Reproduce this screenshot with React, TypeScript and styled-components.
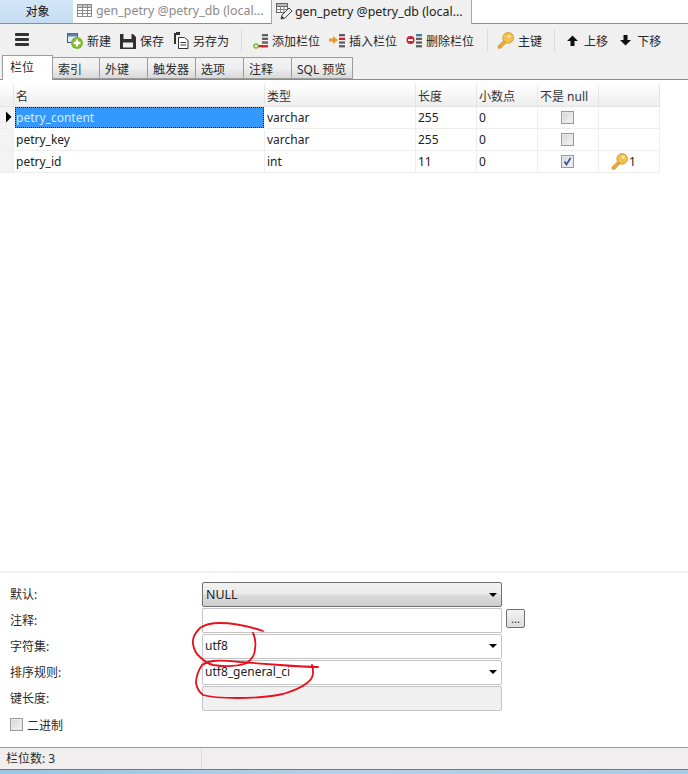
import React from "react";
import styled, { createGlobalStyle } from "styled-components";

const Global = createGlobalStyle`
  html, body { margin: 0; padding: 0; background: #fff; }
  body { font-family: "Noto Sans", "Noto Sans CJK SC", sans-serif; font-size: 12px; color: #1c1c1c; }
`;

const Page = styled.div`
  position: relative;
  width: 688px;
  height: 774px;
  display: flex;
  flex-direction: column;
  overflow: hidden;
  background: #fff;
`;

const TopBar = styled.div`
  height: 24px;
  box-sizing: border-box;
  display: flex;
  background: #fff;
  border-bottom: 1px solid #8d8d8d;
  flex: none;
`;
const ObjectTab = styled.div`
  width: 73px;
  height: 23px;
  background: linear-gradient(#d3e6f8, #c6dcf1);
  display: flex;
  align-items: center;
  justify-content: center;
  padding: 0 0 2px 2px;
  box-sizing: border-box;
  color: #111;
`;
const DocTab = styled.div<{ $active?: boolean }>`
  width: ${p => (p.$active ? 201 : 199)}px;
  height: 24px;
  box-sizing: border-box;
  display: flex;
  align-items: center;
  gap: ${p => (p.$active ? 2 : 3)}px;
  padding: 0 0 2px 4px;
  background: ${p => (p.$active ? "#f0f0f0" : "#fff")};
  color: ${p => (p.$active ? "#222" : "#8a8a8a")};
  border-right: 1px solid #a5a5a5;
  border-bottom: ${p => (p.$active ? "0" : "1px solid #8d8d8d")};
  border-left: ${p => (p.$active ? "1px solid #a5a5a5" : "0")};
  margin-left: ${p => (p.$active ? -1 : 0)}px;
  white-space: nowrap;
  font-size: 12.4px;
  z-index: 1;
`;

const Toolbar = styled.div`
  height: 31px;
  box-sizing: border-box;
  flex: none;
  background: #f0f0f0;
  display: flex;
  align-items: center;
  padding: 2px 0 0 15px;
`;
const Menu = styled.div`
  width: 14px;
  height: 13px;
  margin: -2px 38px 0 0;
  display: flex;
  flex-direction: column;
  justify-content: space-between;
  span { height: 3px; background: #333; border-radius: 1px; }
`;
const ToolButton = styled.div<{ $after?: number; $gap?: number }>`
  display: flex;
  align-items: center;
  gap: ${p => p.$gap ?? 4}px;
  margin-right: ${p => p.$after ?? 9}px;
  white-space: nowrap;
  font-size: 12px;
  color: #262626;
`;
const Sep = styled.div<{ $after: number }>`
  width: 1px;
  height: 23px;
  background: #dcdcdc;
  margin-right: ${p => p.$after}px;
`;

const TabRow = styled.div`
  height: 24px;
  flex: none;
  background: #f0f0f0;
  border-bottom: 1px solid #8c8c8c;
  display: flex;
  align-items: flex-end;
  padding-left: 2px;
`;
const SubTab = styled.div<{ $w: number; $active?: boolean }>`
  width: ${p => p.$w}px;
  height: ${p => (p.$active ? 25 : 22)}px;
  box-sizing: border-box;
  border: 1px solid #9c9c9c;
  border-left-width: ${p => (p.$active ? 1 : 0)}px;
  border-bottom: ${p => (p.$active ? "0" : "1px solid #9c9c9c")};
  background: ${p => (p.$active ? "#fff" : "linear-gradient(#f3f3f3, #f0f0f0 45%, #d9d9d9)")};
  margin-bottom: ${p => (p.$active ? -1 : 0)}px;
  padding-left: ${p => (p.$active ? 7 : 5)}px;
  padding-bottom: ${p => (p.$active ? 3 : 0)}px;
  padding-top: ${p => (p.$active ? 0 : 1)}px;
  display: flex;
  align-items: center;
  font-size: 12px;
  color: #2a2a2a;
  white-space: nowrap;
  z-index: 1;
`;

const GridArea = styled.div`
  flex: 1;
  background: #fff;
  padding-top: 4px;
  min-height: 0;
`;
const Table = styled.div`
  width: 660px;
  display: grid;
  grid-template-columns: 14px 251px 151px 61px 61px 61px 61px;
`;
const Head = styled.div`
  height: 23px;
  box-sizing: border-box;
  padding: 1px 0 0 2px;
  display: flex;
  align-items: center;
  background: linear-gradient(#fff, #f6f6f6 50%, #eeeeee);
  border-right: 1px solid #e6e6e6;
  border-bottom: 1px solid #e4e4e4;
  color: #333;
`;
const Cell = styled.div<{ $center?: boolean }>`
  height: 22px;
  box-sizing: border-box;
  padding: 0 0 1px 2px;
  display: flex;
  align-items: center;
  justify-content: ${p => (p.$center ? "center" : "flex-start")};
  border-right: 1px solid #eeeeee;
  border-bottom: 1px solid #eeeeee;
  font-size: 12px;
  color: #222;
`;
const RowMark = styled(Cell)`
  padding: 0 0 1px 5px;
  background: #f3f3f3;
`;
const SelectedCell = styled(Cell)`
  background: #3399ff;
  color: #d4ecff;
  outline: 1px dotted #123;
  outline-offset: -1px;
  margin: 0 1px 1px 1px;
  height: 21px;
  padding: 0 0 0 1px;
  border: 0;
`;
const Check = styled.span`
  width: 13px;
  height: 13px;
  box-sizing: border-box;
  border: 1px solid #9a9a9a;
  background: linear-gradient(135deg, #d5d5d5, #f6f6f6);
  box-shadow: inset 0 0 0 1px #e9e9e9;
  display: flex;
  align-items: center;
  justify-content: center;
  flex: none;
`;
const CheckCell = styled(Cell)`
  padding: 0 2px 0 0;
`;
const KeyCell = styled(Cell)`
  padding-left: 12px;
  gap: 1px;
`;

const Panel = styled.div`
  flex: none;
  height: 176px;
  box-sizing: border-box;
  border-top: 2px solid #f0f0f0;
  background: #fff;
  padding: 9px 0 0 10px;
`;
const FormGrid = styled.div`
  display: grid;
  grid-template-columns: 192px 300px auto;
  grid-auto-rows: 25px;
  row-gap: 1px;
  align-items: center;
`;
const Label = styled.div`
  font-size: 12px;
  color: #2a2a2a;
  padding-bottom: 1px;
`;
const Field = styled.div<{ $kind?: "null" | "plain" | "disabled" }>`
  height: 25px;
  box-sizing: border-box;
  border: 1px solid ${p => (p.$kind === "null" ? "#707070" : "#c4c4c4")};
  border-radius: ${p => (p.$kind === "plain" ? "1px" : "2px")};
  background: ${p =>
    p.$kind === "null"
      ? "linear-gradient(#f2f2f2, #ebebeb 48%, #dcdcdc 52%, #cfcfcf)"
      : p.$kind === "disabled"
      ? "#f0f0f0"
      : "#fff"};
  display: flex;
  align-items: center;
  justify-content: space-between;
  padding: 0 4px ${p => (p.$kind === "null" ? 0 : 2)}px ${p => (p.$kind === "null" ? 3 : 2)}px;
  font-size: ${p => (p.$kind === "null" ? 12.4 : 12)}px;
  color: #222;
`;
const Caret = styled.span`
  width: 0;
  height: 0;
  margin-top: 1px;
  border-left: 4px solid transparent;
  border-right: 4px solid transparent;
  border-top: 4px solid #000;
`;
const DotsButton = styled.div`
  width: 19px;
  height: 19px;
  margin-left: 4px;
  align-self: start;
  margin-top: 1px;
  box-sizing: border-box;
  border: 1px solid #707070;
  border-radius: 2px;
  background: linear-gradient(#f2f2f2, #dcdcdc);
  display: flex;
  align-items: center;
  justify-content: center;
  font-size: 11px;
  line-height: 1;
  padding-bottom: 1px;
`;
const BinaryRow = styled.div`
  margin-top: 7px;
  height: 13px;
  display: flex;
  align-items: center;
  gap: 4px;
  font-size: 12px;
  color: #2a2a2a;
`;

const StatusBar = styled.div`
  flex: none;
  height: 22px;
  box-sizing: border-box;
  border-top: 1px solid #9b9b9b;
  background: #f0eeee;
  display: flex;
  align-items: center;
  font-size: 12px;
  color: #2a2a2a;
`;
const StatusCell = styled.div`
  width: 202px;
  height: 100%;
  box-sizing: border-box;
  border-right: 1px solid #dcdcdc;
  padding: 0 0 1px 6px;
  display: flex;
  align-items: center;
`;
const TaskStrip = styled.div`
  flex: none;
  height: 5px;
  box-sizing: border-box;
  border-top: 1px solid #5c8193;
  background: linear-gradient(90deg, #9cc4df, #b5d0e6 50%, #a9cbe3);
`;
const Scribble = styled.svg`
  position: absolute;
  left: 0;
  top: 0;
  pointer-events: none;
`;

const GridIcon = () => (
  <svg width="16" height="15" viewBox="0 0 16 15" fill="none" stroke="#8a8a8a">
    <rect x=".5" y="1.5" width="14" height="12" fill="#fff" />
    <rect x=".5" y="1.5" width="14" height="3" fill="#c9c9c9" />
    <path d="M.5 7.5h14M.5 10.5h14M5.5 1.5v12M10.500 1.500v12" />
  </svg>
);
const DesignIcon = () => (
  <svg width="17" height="17" viewBox="0 0 17 17" fill="none">
    <rect x=".5" y=".5" width="11" height="9" stroke="#666" fill="#fff" />
    <rect x=".5" y=".5" width="11" height="3" stroke="#666" fill="#bbb" />
    <path d="M4.500 3.500v6M8 3.500v6M.5 6.500h11" stroke="#888" />
    <path d="M5 16l1-4 7-7 3 3-7 7z" fill="#eee" stroke="#444" />
    <path d="M5 16l1-3 2 2z" fill="#333" />
  </svg>
);
const NewIcon = () => (
  <svg width="16" height="16" viewBox="0 0 16 16">
    <rect x=".5" y=".5" width="10" height="9" fill="#e4eef8" stroke="#3c5a78" />
    <rect x=".5" y=".5" width="10" height="3" fill="#5a84ad" />
    <circle cx="10" cy="10" r="6" fill="#7cb82c" />
    <path d="M10 6.500v7M6.500 10h7" stroke="#fff" strokeWidth="2.400" />
  </svg>
);
const SaveIcon = () => (
  <svg width="16" height="16" viewBox="0 0 16 16">
    <path d="M0 1h13l3 3v12H0z" fill="#2f2f2f" />
    <rect x="3.500" y="1" width="8" height="5" fill="#f0f0f0" />
    <rect x="3" y="9.500" width="10" height="5" fill="#f0f0f0" />
  </svg>
);
const SaveAsIcon = () => (
  <svg width="16" height="17" viewBox="0 0 16 17">
    <path d="M1 1h6v2H3v9H1z" fill="#333" />
    <rect x="3" y="0" width="4" height="3" fill="#333" />
    <path d="M5.500 5.500h6l3.500 3v8h-9.500z" fill="#fff" stroke="#333" />
    <path d="M7.500 10.500h5.500M7.500 13h5.500" stroke="#333" />
  </svg>
);
const Bars = ({ x, accent, tone }: { x: number; accent: number; tone: string }) => (
  <>
    {[0, 1, 2, 3].map(i => (
      <rect key={i} x={x} y={1 + i * 3.700} width="6" height="2.300" fill={i === accent ? tone : "#5f5f5f"} />
    ))}
  </>
);
const AddColIcon = () => (
  <svg width="16" height="16" viewBox="0 0 16 16">
    <Bars x={10} accent={3} tone="#d3202a" />
    <rect x="4" y="12" width="7" height="2.300" fill="#d3202a" />
    <circle cx="4" cy="13" r="2.800" fill="#78b82a" />
    <path d="M4 11.500v3M2.500 13h3" stroke="#fff" />
  </svg>
);
const InsertColIcon = () => (
  <svg width="16" height="16" viewBox="0 0 16 16">
    <Bars x={10} accent={1} tone="#d3202a" />
    <path d="M0 5.500h4V3l5 4-5 4V8.500H0z" fill="#f29a1f" />
  </svg>
);
const DelColIcon = () => (
  <svg width="16" height="16" viewBox="0 0 16 16">
    <Bars x={10} accent={0} tone="#3f7ea3" />
    <circle cx="4.500" cy="7" r="4" fill="#d3202a" />
    <rect x="2" y="6" width="5" height="2" fill="#fff" />
  </svg>
);
const KeyIcon = () => (
  <svg width="17" height="17" viewBox="0 0 16 16">
    <path d="M7.200 7.200L1 13.200l.2 2 2.200.2L9 9.600" fill="#eaa93a" stroke="#c98a20" strokeWidth=".6" />
    <circle cx="10.500" cy="5.500" r="5" fill="#f3c14f" stroke="#cf951f" strokeWidth=".8" />
    <circle cx="11.500" cy="4.200" r="1.300" fill="#fff2c2" />
  </svg>
);
const ArrowUp = () => (
  <svg width="11" height="11" viewBox="0 0 11 11">
    <path d="M5.500 .5L11 6H7.500v5h-4V6H0z" fill="#111" />
  </svg>
);
const ArrowDown = () => (
  <svg width="11" height="11" viewBox="0 0 11 11">
    <path d="M5.500 10.500L11 5H7.500V0h-4v5H0z" fill="#111" />
  </svg>
);
const Marker = () => (
  <svg width="7" height="12" viewBox="0 0 7 12"><path d="M1 .5L6.500 6 1 11.500z" fill="#000" /></svg>
);
const CheckMark = () => (
  <svg width="9" height="9" viewBox="0 0 9 9" fill="none"><path d="M1.500 4.500l2 3L7.500 1" stroke="#34559a" strokeWidth="1.700" /></svg>
);

const columns = ["", "名", "类型", "长度", "小数点", "不是 null", ""];
const rows = [
  { name: "petry_content", type: "varchar", len: "255", on: false, key: false },
  { name: "petry_key", type: "varchar", len: "255", on: false, key: false },
  { name: "petry_id", type: "int", len: "11", on: true, key: true },
];
const subTabs: [string, number][] = [["索引", 47], ["外键", 48], ["触发器", 48], ["选项", 48], ["注释", 48], ["SQL 预览", 61]];

export default function App() {
  return (
    <Page>
      <Global />
      <TopBar>
        <ObjectTab>对象</ObjectTab>
        <DocTab><GridIcon /><span>gen_petry @petry_db (local...</span></DocTab>
        <DocTab $active><DesignIcon /><span>gen_petry @petry_db (local...</span></DocTab>
      </TopBar>
      <Toolbar>
        <Menu><span /><span /><span /></Menu>
        <ToolButton><NewIcon />新建</ToolButton>
        <ToolButton><SaveIcon />保存</ToolButton>
        <ToolButton $after={12}><SaveAsIcon />另存为</ToolButton>
        <Sep $after={10} />
        <ToolButton><AddColIcon />添加栏位</ToolButton>
        <ToolButton><InsertColIcon />插入栏位</ToolButton>
        <ToolButton $after={13}><DelColIcon />删除栏位</ToolButton>
        <Sep $after={9} />
        <ToolButton $after={12}><KeyIcon />主键</ToolButton>
        <Sep $after={12} />
        <ToolButton $after={12} $gap={6}><ArrowUp />上移</ToolButton>
        <ToolButton $gap={6}><ArrowDown />下移</ToolButton>
      </Toolbar>
      <TabRow>
        <SubTab $w={51} $active>栏位</SubTab>
        {subTabs.map(([t, w]) => <SubTab key={t} $w={w}>{t}</SubTab>)}
      </TabRow>
      <GridArea>
        <Table>
          {columns.map((c, i) => <Head key={i}>{c}</Head>)}
          {rows.map((r, i) => (
            <React.Fragment key={r.name}>
              <RowMark>{i === 0 && <Marker />}</RowMark>
              {i === 0 ? <SelectedCell>{r.name}</SelectedCell> : <Cell>{r.name}</Cell>}
              <Cell>{r.type}</Cell>
              <Cell>{r.len}</Cell>
              <Cell>0</Cell>
              <CheckCell $center>
                <Check>{r.on && <CheckMark />}</Check>
              </CheckCell>
              {r.key ? <KeyCell><KeyIcon />1</KeyCell> : <Cell />}
            </React.Fragment>
          ))}
        </Table>
      </GridArea>
      <Panel>
        <FormGrid>
          <Label>默认:</Label>
          <Field $kind="null">NULL<Caret /></Field>
          <span />
          <Label>注释:</Label>
          <Field $kind="plain" />
          <DotsButton>...</DotsButton>
          <Label>字符集:</Label>
          <Field>utf8<Caret /></Field>
          <span />
          <Label>排序规则:</Label>
          <Field>utf8_general_ci<Caret /></Field>
          <span />
          <Label>键长度:</Label>
          <Field $kind="disabled" />
          <span />
        </FormGrid>
        <BinaryRow><Check />二进制</BinaryRow>
      </Panel>
      <StatusBar><StatusCell>栏位数: 3</StatusCell></StatusBar>
      <TaskStrip />
      <Scribble width="688" height="774" viewBox="0 0 688 774" fill="none" stroke="#e8101c" strokeWidth="1.800" strokeLinecap="round" strokeLinejoin="round">
        <path d="M263 631C248 626 233 623 220 623C210 623 204 625 200 628C195 633 192 638 193 644C194 650 196 654 200 657C204 661 208 664 213 665C225 667 240 666 247 663C252 659 255 655 255 649C256 643 255 637 253 633" />
        <path d="M318 667C306 667 293 666 280 665C266 664 253 663 240 662C230 661 221 660 213 661C208 662 205 663 202 665C198 671 196 677 196 683C197 689 199 692 203 695C213 698 225 698 237 698C253 698 269 697 283 694C293 691 301 688 307 683C311 680 313 677 313 673C313 670 313 667 312 665" />
      </Scribble>
    </Page>
  );
}
